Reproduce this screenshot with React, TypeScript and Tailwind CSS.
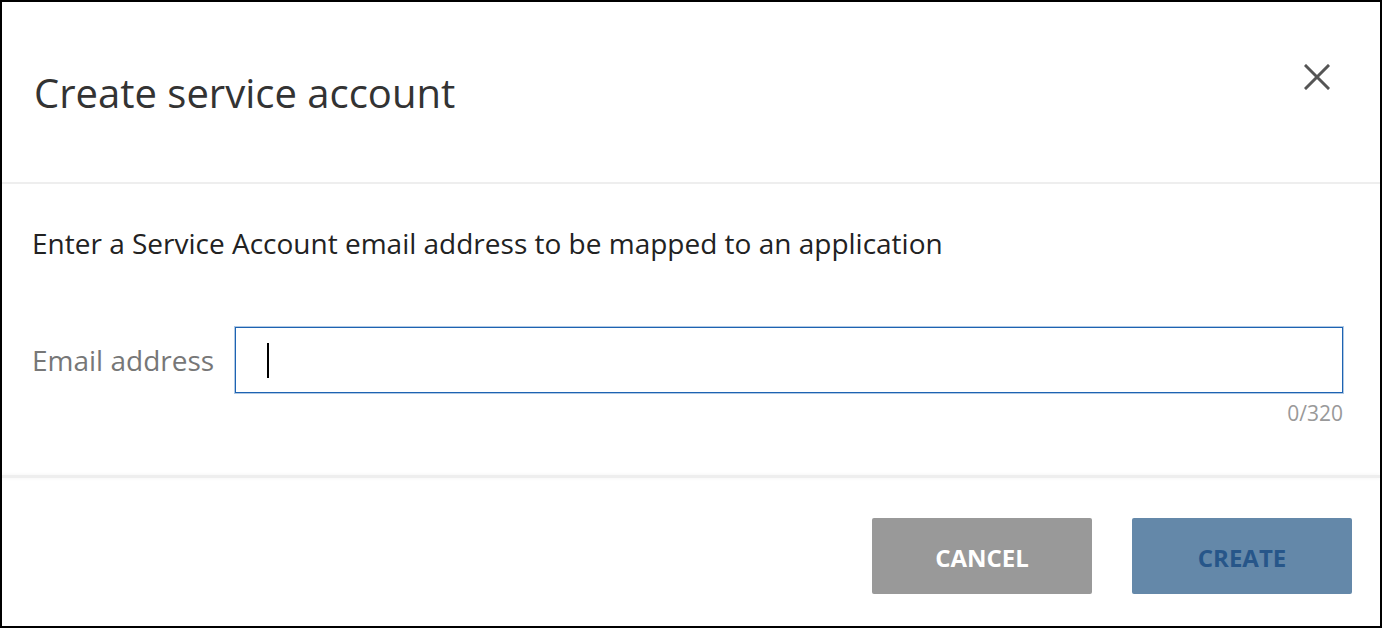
export default function App() {
  return (
    <div
      className="w-[1382px] h-[628px] border-2 border-black bg-white flex flex-col overflow-hidden"
      style={{ fontFamily: '"Open Sans", "Liberation Sans", sans-serif' }}
    >
      {/* Header */}
      <div className="h-[180px] flex items-start justify-between pl-[32px] pr-[47px] shrink-0">
        <h1 className="pt-[71px] text-[40px] leading-[40px] font-normal text-[#333333]">
          Create service account
        </h1>
        <button className="mt-[59px] w-[32px] h-[32px] flex items-center justify-center text-[#555555]">
          <svg width="26" height="26" viewBox="0 0 26 26" fill="none" stroke="currentColor" strokeWidth="3" strokeLinecap="square">
            <path d="M2 2L24 24M24 2L2 24" />
          </svg>
        </button>
      </div>
      <div className="h-[2px] bg-[#eeeeee] shrink-0" />

      {/* Body */}
      <div className="h-[291px] shrink-0 pl-[30px] pr-[37px] pt-[40px] flex flex-col">
        <p className="text-[28px] leading-[38px] text-[#222222]">
          Enter a Service Account email address to be mapped to an application
        </p>
        <div className="mt-[65px] flex items-center">
          <label className="w-[203px] shrink-0 text-[28px] leading-[38px] text-[#777777]">Email address</label>
          <div className="flex-1 h-[66px] border border-[#1d63b2] shadow-[0_0_0_1px_rgba(29,99,178,0.35)] flex items-center">
            <span className="ml-[31px] w-[2px] h-[35px] bg-black" />
          </div>
        </div>
        <div className="mt-[6px] text-right text-[21px] leading-[28px] text-[#999999]">0/320</div>
      </div>
      <div className="h-[3px] bg-[#eeeeee] shadow-[0_0_4px_rgba(0,0,0,0.06)] shrink-0" />

      {/* Footer */}
      <div className="flex justify-end gap-[40px] pr-[28px] pt-[40px]">
        <button className="w-[220px] h-[76px] pt-[4px] rounded-[2px] bg-[#999999] text-white text-[24px] font-bold">
          CANCEL
        </button>
        <button className="w-[220px] h-[76px] pt-[4px] rounded-[2px] bg-[#6488a9] text-[#275689] text-[24px] font-bold">
          CREATE
        </button>
      </div>
    </div>
  )
}
